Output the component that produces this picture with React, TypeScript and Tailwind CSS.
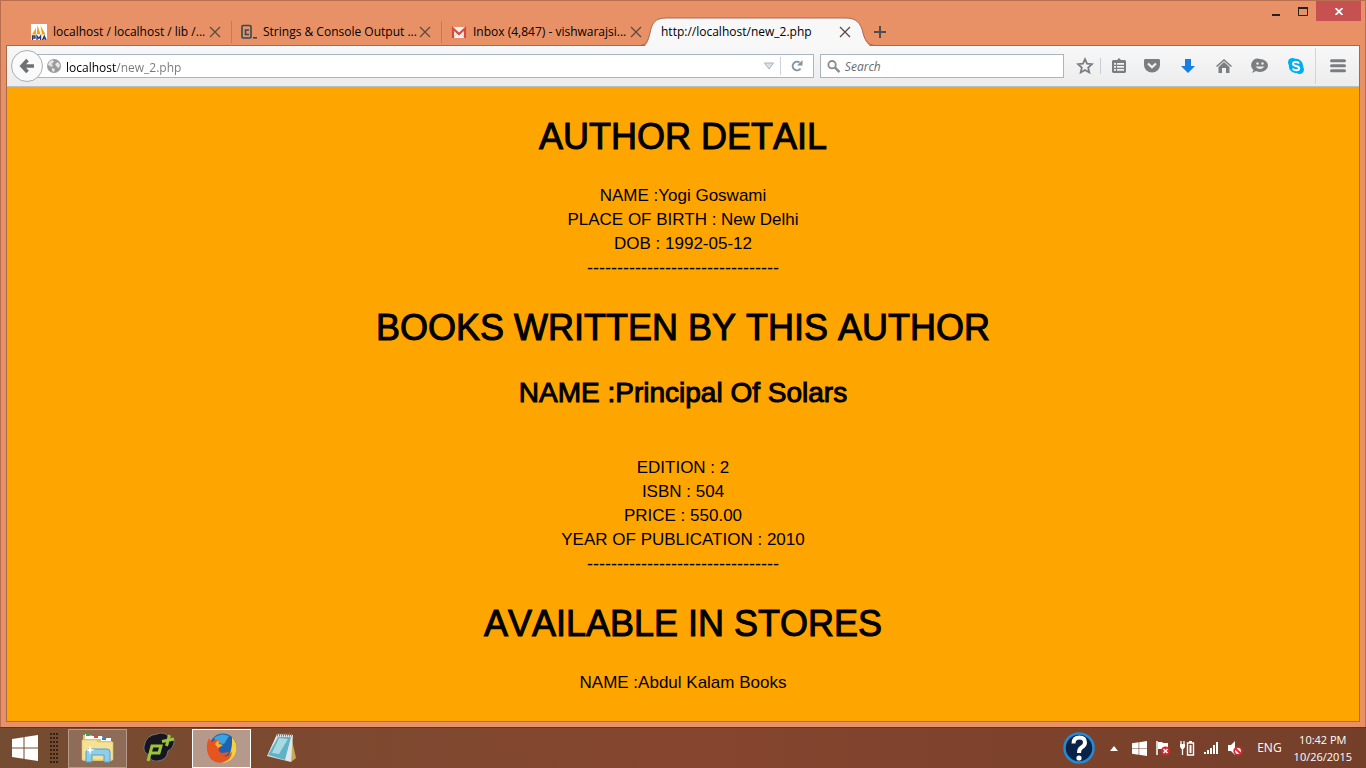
import type { ReactNode } from "react";

const ink = "#5c4a42";

function PmaIcon() {
  return (
    <svg width="16" height="16" viewBox="0 0 16 16" aria-hidden="true">
      <rect width="16" height="16" fill="#fff" />
      <path d="M1 10.500 5 4v6.500zM5.800 10 6.500 1l3 9.500zM9.500 1.500 14.500 10.500H11z" fill="#f89c0e" />
      <path d="M1.500 16v-4H4v2H2m4 2v-4l1.800 2.500L9.600 12v4m1.900 0 1.800-4 1.800 4m-3-1.200h2.400" fill="none" stroke="#2b3b72" strokeWidth="1.300" />
    </svg>
  );
}

function CodecademyIcon() {
  return (
    <svg width="16" height="16" viewBox="0 0 16 16" aria-hidden="true">
      <rect x="1" y="1.500" width="9" height="12.500" rx="1" fill="none" stroke="#324953" strokeWidth="1.600" />
      <path d="M8 6H4.500v4.500H8" fill="none" stroke="#324953" strokeWidth="1.600" />
      <rect x="12" y="13" width="4" height="1.600" fill="#324953" />
    </svg>
  );
}

function GmailIcon() {
  return (
    <svg width="16" height="16" viewBox="0 0 16 16" aria-hidden="true">
      <rect x="1" y="3" width="14" height="11" fill="#f3f1f0" />
      <path d="m2 14 5-5m7 5-5-5" stroke="#d4d0ce" />
      <path d="M2 14V4.500L8 10l6-5.500V14" fill="none" stroke="#d54b3d" strokeWidth="2.200" />
    </svg>
  );
}

function CloseGlyph() {
  return (
    <svg width="12" height="12" viewBox="0 0 12 12" aria-hidden="true">
      <path d="m1 1 10 10M11 1 1 11" stroke={ink} strokeWidth="1.300" />
    </svg>
  );
}

type TabInfo = { title: string; icon: ReactNode };

const tabs: TabInfo[] = [
  { title: "localhost / localhost / lib /...", icon: <PmaIcon /> },
  { title: "Strings & Console Output ...", icon: <CodecademyIcon /> },
  { title: "Inbox (4,847) - vishwarajsi...", icon: <GmailIcon /> },
];

function TabStrip() {
  return (
    <div className="flex h-7 items-stretch pl-4">
      {tabs.map((tab, i) => (
        <div key={tab.title} className="flex w-[210px] pb-0.5 pt-1">
          <div className={`flex h-full w-full items-center justify-between pl-[9px] pr-[10px] ${i < 2 ? "border-r border-[#c17a5c]" : ""}`}>
            <button className="flex items-center gap-1.5 whitespace-nowrap text-left">
              {tab.icon}
              <span>{tab.title}</span>
            </button>
            <button aria-label={`Close ${tab.title}`} className="shrink-0">
              <CloseGlyph />
            </button>
          </div>
        </div>
      ))}
      <div className="relative z-10 flex w-[222px] items-center justify-between pl-[9px] pr-[23px] pt-0.5">
        <svg className="absolute -left-3 top-0 h-[29px] w-[236px]" viewBox="0 0 236 29" aria-hidden="true">
          <path d="M5 29C8 26 9 21 10 16 12 6 15 1 26 1H206C216 1 221 6 223 16 224 21 226 26 230 29z" fill="#f8f8f8" />
          <path d="M0 28.500C6 28 8 24 10 16 12 6 15 1 26 1H206C216 1 221 6 223 16 225 24 228 28 235 28.500" fill="none" stroke="#a9684e" />
        </svg>
        <button className="relative whitespace-nowrap">http://localhost/new_2.php</button>
        <button aria-label="Close tab" className="relative">
          <CloseGlyph />
        </button>
      </div>
      <button aria-label="New tab" className="flex items-center pt-0.5">
        <svg width="12" height="12" viewBox="0 0 12 12" aria-hidden="true">
          <path d="M6 0v12M0 6h12" stroke="#4f4f4f" strokeWidth="2" />
        </svg>
      </button>
    </div>
  );
}

function ToolButton({ label, children }: { label: string; children: ReactNode }) {
  return (
    <button aria-label={label} className="flex h-6 w-9 items-center justify-center">
      <svg width="18" height="18" viewBox="0 0 18 18" fill="#7b7e81" aria-hidden="true">
        {children}
      </svg>
    </button>
  );
}

function Toolbar() {
  return (
    <div className="flex h-[41px] items-center border-b border-[#b9bec2] bg-linear-to-b from-[#f8f8f8] to-[#ececec] pl-1">
      <button aria-label="Back" className="relative z-10 flex size-8 shrink-0 items-center justify-center rounded-full border border-[#a9adb1] bg-[#fafafa]">
        <svg width="16" height="16" viewBox="0 0 16 16" aria-hidden="true">
          <path d="M8.500 2 3 8l5.500 6M3 8h12" fill="none" stroke="#6d7174" strokeWidth="3.600" />
        </svg>
      </button>
      <div className="-ml-2 flex h-6 grow items-center border border-[#a8b6c2] bg-white pl-[11px]">
        <svg width="14" height="14" viewBox="0 0 14 14" aria-hidden="true">
          <circle cx="7" cy="7" r="7" fill="#9b9b9b" />
          <path d="M2 3 5 1l2 1-1 2-2 1 2 1-1 2-2-1-2-1zM8 5l3-2 2 3-1 3-2-1zM5 9l3 1-1 3-2-1z" fill="#e6e6e6" />
        </svg>
        <input
          aria-label="Address"
          defaultValue="localhost/new_2.php"
          className="ml-[5px] h-full min-w-0 grow bg-linear-to-r from-black from-[50px] to-[#777] to-[50px] bg-clip-text pt-0.5 text-transparent outline-none"
        />
        <button aria-label="Show history" className="px-[6px]">
          <svg width="10" height="8" viewBox="0 0 10 8" aria-hidden="true">
            <path d="M.5 1h9L5 7z" fill="#dde1e6" stroke="#a9b1ba" />
          </svg>
        </button>
        <button aria-label="Reload" className="flex h-[18px] w-[33px] items-center justify-center border-l border-[#ccd2d8]">
          <svg width="12" height="12" viewBox="0 0 12 12" aria-hidden="true">
            <path d="M9.500 8.500A4.300 4.300 0 1 1 8.500 2.500" fill="none" stroke="#8494a3" strokeWidth="2" />
            <path d="M11.500 0v5.500H6z" fill="#8494a3" />
          </svg>
        </button>
      </div>
      <label className="ml-[6px] flex h-6 w-[244px] shrink-0 items-center gap-1 border border-[#a8b6c2] bg-white pl-[6px]">
        <svg width="15" height="15" viewBox="0 0 15 15" aria-hidden="true">
          <circle cx="5.500" cy="5.500" r="4" fill="none" stroke="#8d8d8d" strokeWidth="2" />
          <path d="m8.500 8.500 5 5" stroke="#8d8d8d" strokeWidth="2.600" />
        </svg>
        <input aria-label="Search" placeholder="Search" className="w-full min-w-0 bg-transparent pt-0.5 italic outline-none placeholder:text-[#6b6b6b]" />
      </label>
      <div className="ml-[3px] flex items-center">
        <ToolButton label="Bookmark">
          <path d="m9 2.200 2 4.500 5 .5-3.800 3.400 1.100 4.900L9 13l-4.300 2.500 1.100-4.900L2 7.200l5-.5z" fill="none" stroke="#7b7e81" strokeWidth="1.800" />
        </ToolButton>
        <div className="-mx-[3px] flex items-center border-l border-[#c6cfd6] [&>button]:h-4">
          <ToolButton label="Bookmarks list">
            <path fillRule="evenodd" d="M3 3h4l2-2 2 2h4l1 1v11l-1 1H3l-1-1V4zM4 6v1.800h2V6zm3 0v1.800h7V6zM4 9v1.800h2V9zm3 0v1.800h7V9zm-3 3v1.800h2V12zm3 0v1.800h7V12z" />
          </ToolButton>
        </div>
        <ToolButton label="Pocket">
          <path d="M2 2h14l1 1v5a8 7.500 0 0 1-16 0V3z" />
          <path d="m5 6.500 4 3.800 4-3.800" fill="none" stroke="#f3f3f3" strokeWidth="2.200" />
        </ToolButton>
        <ToolButton label="Downloads">
          <path d="M6 2h6v7h4l-7 7-7-7h4z" fill="#177ee6" />
        </ToolButton>
        <ToolButton label="Home">
          <path d="m1 9 8-7 8 7-1 1-7-6-7 6z" />
          <path d="m3.500 10 5.500-5 5.500 5v6H11v-5H7v5H3.500z" />
        </ToolButton>
        <ToolButton label="Chat">
          <path d="M9 2a8 6.500 0 0 1 0 13q-2 0-4-1l-4 2 1.500-3A6.500 6.500 0 0 1 9 2" />
          <circle cx="6.500" cy="6.500" r="1.200" fill="#eee" />
          <circle cx="11.500" cy="6.500" r="1.200" fill="#eee" />
          <path d="M4.500 9.500h9q-4.500 5-9 0" fill="#eee" />
        </ToolButton>
        <ToolButton label="Skype">
          <circle cx="5.500" cy="5.500" r="4.500" fill="#00aff0" />
          <circle cx="12.500" cy="12.500" r="4.500" fill="#00aff0" />
          <circle cx="9" cy="9" r="7.200" fill="#00aff0" />
          <path d="M12 6.500C11 4.500 6 4.500 6 7s6.200 1.500 6.200 4.200-5.200 2.800-6.400.3" fill="none" stroke="#fff" strokeWidth="1.900" />
        </ToolButton>
      </div>
      <button aria-label="Open menu" className="ml-px flex h-9 w-[44px] shrink-0 items-center justify-center border-l border-[#d5d5d5]">
        <svg width="16" height="14" viewBox="0 0 16 14" aria-hidden="true">
          <path d="M1.500 1.700h13M1.500 6.700h13M1.500 11.700h13" stroke="#7b7e81" strokeWidth="3" strokeLinecap="round" />
        </svg>
      </button>
    </div>
  );
}

const heading = "text-[36px] leading-[42px] font-normal [font-kerning:none] [-webkit-text-stroke:1px_black]";
const dashes = "--------------------------------";

function PageContent() {
  return (
    <main className="grow overflow-hidden bg-[#ffa500] pt-[29px] text-center font-['Liberation_Sans',sans-serif] text-[17px] leading-6 text-black">
      <h1 className={heading}>AUTHOR DETAIL</h1>
      <div className="mt-[26px]">
        <p>NAME :Yogi Goswami</p>
        <p>PLACE OF BIRTH : New Delhi</p>
        <p>DOB : 1992-05-12</p>
        <p className="text-[18px]">{dashes}</p>
      </div>
      <h1 className={`mt-[27px] ${heading}`}>BOOKS WRITTEN BY THIS AUTHOR</h1>
      <h2 className="mt-7 text-[28px] leading-8 font-normal [font-kerning:none] [-webkit-text-stroke:1px_black]">NAME :Principal Of Solars</h2>
      <div className="mt-[47px]">
        <p>EDITION : 2</p>
        <p>ISBN : 504</p>
        <p>PRICE : 550.00</p>
        <p>YEAR OF PUBLICATION : 2010</p>
        <p className="text-[18px]">{dashes}</p>
      </div>
      <h1 className={`mt-[27px] ${heading}`}>AVAILABLE IN STORES</h1>
      <p className="mt-[26px]">NAME :Abdul Kalam Books</p>
    </main>
  );
}

function WindowsLogo({ size }: { size: number }) {
  return (
    <svg width={size} height={size} viewBox="0 0 26 26" fill="#fff" aria-hidden="true">
      <path d="M0 4 11.500 2.200v10.300H0zM12.500 2 26 0v12.500H12.500zM0 13.500h11.500v10.300L0 22zM12.500 13.500H26V26l-13.500-2z" />
    </svg>
  );
}

function Taskbar() {
  return (
    <footer className="flex h-[41px] shrink-0 items-center border-t border-[#54382b] bg-linear-to-r from-[#744c31] via-[#86452f] to-[#743f29] text-white">
      <button aria-label="Start" className="ml-[11px] flex w-[27px] justify-center">
        <WindowsLogo size={26} />
      </button>
      <svg className="ml-[11px]" width="10" height="31" viewBox="0 0 10 31" aria-hidden="true">
        {[0, 4, 8, 12, 16, 20, 24, 28].map((y) => (
          <path key={y} d={`M1 ${y + 1}h2m1 0h2m1 0h2`} stroke="#34211a" strokeWidth="2" />
        ))}
      </svg>
      <button aria-label="File Explorer" className="ml-[9px] flex h-[39px] w-[59px] items-center justify-center border border-[#b39a8c] bg-[#8f6c57]">
        <svg width="34" height="34" viewBox="0 0 34 34" aria-hidden="true">
          <path d="M2 4h8l2 2h10v4h9v20H2z" fill="#e2c667" />
          <path d="M4 3h5v2h4v3H4z" fill="#fff" />
          <path d="M5 3h4v2H5z" fill="#18b83e" />
          <path d="M12 5h9v3h-9z" fill="#fff" />
          <path d="M13 5h4v2h-4z" fill="#e24b31" />
          <path d="M20 7h10v3H20z" fill="#fff" />
          <path d="M21 7h4v2h-4z" fill="#2287d6" />
          <path d="M1 9h14l2 2h15v18H1z" fill="#f5e196" stroke="#d9bf62" strokeWidth=".6" />
          <path d="M5 31V21q0-3 3-3h18q3 0 3 3v10h-6v-7H11v7z" fill="#8fcdeb" stroke="#4da2d0" />
          <path d="m9 14 1 4 4 1-4 1-1 4-1-4-4-1 4-1z" fill="#fff" />
        </svg>
      </button>
      <button aria-label="P+" className="ml-[14px] flex w-9 justify-center">
        <svg width="34" height="32" viewBox="0 0 34 32" aria-hidden="true">
          <path d="M15 2q7-3 12 3 6 0 5 6-1 6-6 8-1 9-10 10-8 1-9-6-6-2-5-9Q4 3 15 2" fill="#17151e" stroke="#77717d" />
          <path d="M6 29 10 14H19l-2 7H8" fill="none" stroke="#9dc33b" strokeWidth="3" />
          <path d="M20 9.500 32 7M27.500 3 24.500 14" stroke="#9dc33b" strokeWidth="3" />
        </svg>
      </button>
      <button aria-label="Firefox" className="ml-[15px] flex h-[39px] w-[59px] items-center justify-center border border-white bg-[#b59a8b]">
        <svg width="32" height="32" viewBox="0 0 32 32" aria-hidden="true">
          <circle cx="17" cy="15" r="13.500" fill="#1e63b2" />
          <path d="M8 6q7-6 15-2l-5 8-7-1z" fill="#3aa4df" />
          <path d="M26 5q6 6 4 15-3 10-14 11 11-6 10-26" fill="#fbcf38" />
          <path d="M3 6q1 3 3 4 3-3 7-2-2 3 0 4l4 1-4 3q-1 4 3 5l7-1q-2 4-6 4 6 2 9-5 0 8-8 11Q6 33 2 22-1 13 3 6" fill="#e65520" />
          <path d="m12 8 1 4 4 1-5 3-3-4z" fill="#f6b233" />
        </svg>
      </button>
      <button aria-label="Notepad" className="ml-[15px] flex w-8 justify-center">
        <svg width="32" height="32" viewBox="0 0 32 32" aria-hidden="true">
          <path d="m25 4 5 22-5 4z" fill="#c9a85c" />
          <path d="m11 2 16 1-2 27L1 24z" fill="#dfe6e8" />
          <path d="M12 5h13l-6 23L2 23z" fill="#5fb3c6" />
          <path d="m13 6 9 1-9 15-7-1z" fill="#a8dbe1" />
          <path d="M11 3h16" stroke="#758087" strokeWidth="3" strokeDasharray="1 1" />
        </svg>
      </button>
      <div className="ml-auto flex items-center">
        <button aria-label="Help">
          <svg width="32" height="32" viewBox="0 0 32 32" aria-hidden="true">
            <circle cx="16" cy="16" r="14.500" fill="#0a2148" stroke="#218bd4" strokeWidth="2.500" />
            <path d="M10.500 11.500q0-6 6-6 5.500 0 5.500 5 0 3-3.500 5Q16 17 16 21" fill="none" stroke="#fff" strokeWidth="4" />
            <circle cx="16" cy="26" r="2.600" fill="#fff" />
          </svg>
        </button>
        <button aria-label="Show hidden icons" className="ml-[15px]">
          <svg width="8" height="5" viewBox="0 0 8 5" aria-hidden="true"><path d="m0 5 4-5 4 5z" fill="#fff" /></svg>
        </button>
        <div className="ml-[14px] flex items-center gap-2">
          <WindowsLogo size={15} />
          <svg width="16" height="16" viewBox="0 0 16 16" aria-hidden="true">
            <path d="M2 1v14" stroke="#fff" strokeWidth="1.500" />
            <path d="M3 2h4l1 1h5v7H8L7 9H3z" fill="#fff" />
            <circle cx="10.500" cy="11" r="4.600" fill="#d9262e" />
            <path d="m8.500 9 4 4m0-4-4 4" stroke="#fff" strokeWidth="1.500" />
          </svg>
          <svg width="16" height="16" viewBox="0 0 16 16" aria-hidden="true">
            <path d="M2 1v3M5 1v3M3.500 8v7" stroke="#fff" strokeWidth="1.300" />
            <path d="M1 4h5v3L4.500 9h-2L1 7z" fill="#fff" />
            <path d="M8.500 3h6v12h-6z" fill="none" stroke="#fff" strokeWidth="1.400" />
            <path d="M10.500 5h2v8h-2zM10 1h3v2h-3z" fill="#fff" />
          </svg>
          <svg width="16" height="16" viewBox="0 0 16 16" fill="#fff" aria-hidden="true">
            <path d="M1 12h2v2H1zM4 10h2v4H4zM7 8h2v6H7zM10 5h2v9h-2zM13 2h2v12h-2z" />
          </svg>
          <svg width="16" height="16" viewBox="0 0 16 16" aria-hidden="true">
            <path d="M1 5h3l4-4v14l-4-4H1z" fill="#fff" />
            <circle cx="11" cy="11" r="3.800" fill="#fff" stroke="#d9262e" strokeWidth="1.800" />
            <path d="m8.500 8.500 5 5" stroke="#d9262e" strokeWidth="1.800" />
          </svg>
        </div>
        <button className="ml-[14px]">ENG</button>
        <button className="ml-3 mr-[14px] text-center text-[11px] leading-[17px]">
          <span className="block">10:42 PM</span>
          <span className="block">10/26/2015</span>
        </button>
      </div>
    </footer>
  );
}

export default function App() {
  return (
    <div className="flex min-h-screen flex-col bg-[#e99166] font-['Open_Sans','Noto_Sans',sans-serif] text-[12px] leading-4 text-black">
      <div className="flex grow flex-col border border-b-0 border-[#b86f50] px-[5px] pb-[5px]">
        <header className="-mr-px flex h-4 items-start justify-end">
          <button aria-label="Minimize" className="flex h-5 w-[27px] items-center justify-center">
            <svg width="8" height="12" viewBox="0 0 8 12" aria-hidden="true"><path d="M0 9h8v2H0z" fill="#222" /></svg>
          </button>
          <button aria-label="Maximize" className="flex h-5 w-[27px] items-center justify-center">
            <svg width="10" height="9" viewBox="0 0 10 9" aria-hidden="true"><path d="M.5 1h9v7.500h-9z" fill="none" stroke="#222" /><path d="M0 0h10v2H0z" fill="#222" /></svg>
          </button>
          <button aria-label="Close window" className="flex h-5 w-[45px] items-center justify-center bg-[#c75050]">
            <svg width="8" height="7" viewBox="0 0 8 7" aria-hidden="true"><path d="m.5 0 7 7m0-7-7 7" stroke="#fff" strokeWidth="1.800" /></svg>
          </button>
        </header>
        <TabStrip />
        <div className="flex grow flex-col border border-[#a9684e]">
          <Toolbar />
          <PageContent />
        </div>
      </div>
      <Taskbar />
    </div>
  );
}
